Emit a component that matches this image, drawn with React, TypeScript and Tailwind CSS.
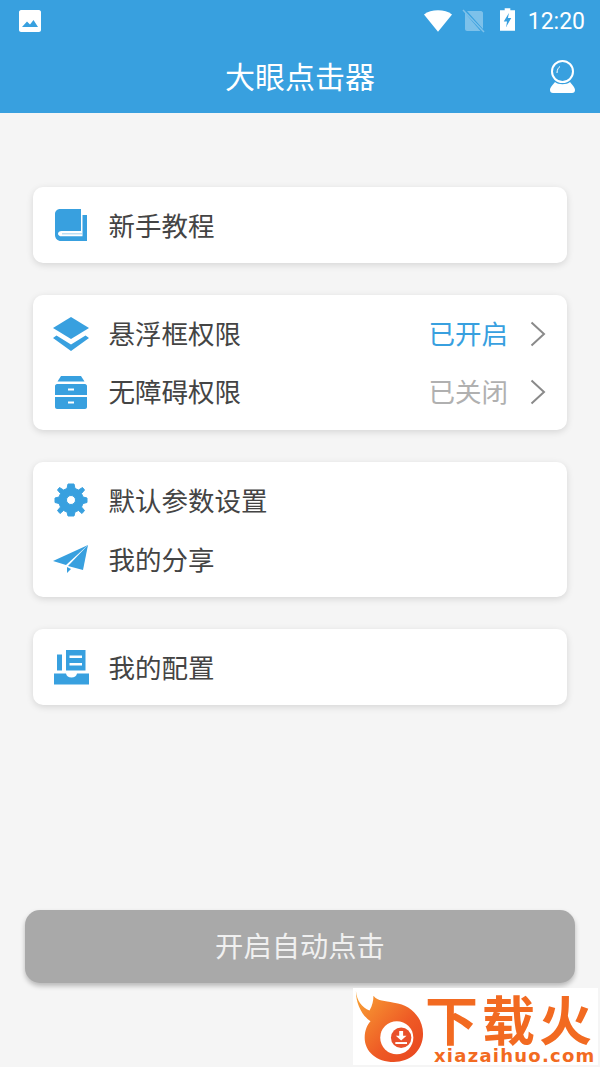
import React from 'react';

const cjk = "font-['Noto_Sans_CJK_SC',sans-serif]";

function BookIcon() {
  return (
    <svg width="32" height="32" viewBox="0 0 32 32" fill="#38a0df">
      <path d="M5 0H26V22H6.500C4.500 22 3 23.300 3 24.700C3 26.100 4.500 27.300 6.500 27.300H27.500V6H32V32H6C2.600 32 0 29.400 0 26V5C0 2.200 2.200 0 5 0Z" />
      <path d="M7 24H27V25.500H7Z" fillOpacity="0.35" />
    </svg>
  );
}

function LayersIcon() {
  return (
    <svg width="38" height="34" viewBox="0 0 38 34" fill="#38a0df" className="mt-[2px]">
      <path d="M19 0L37 11L19 22L1 11Z" />
      <path d="M4.500 18.500L19 27.500L33.500 18.500L37 21L19 34L1 21Z" />
    </svg>
  );
}

function DrawerIcon() {
  return (
    <svg width="32" height="33" viewBox="0 0 32 33" fill="#38a0df" className="mt-[2px]">
      <path d="M6 0H26L29.500 5.500H2.500Z" />
      <path fillRule="evenodd" d="M2 8H30C31 8 32 9 32 10V19H0V10C0 9 1 8 2 8ZM13 12.500V14.500H19V12.500Z" />
      <path fillRule="evenodd" d="M0 21H32V31C32 32 31 33 30 33H2C1 33 0 32 0 31ZM13 25.500V27.500H19V25.500Z" />
    </svg>
  );
}

function GearIcon() {
  return (
    <svg width="34" height="34" viewBox="0 0 34 34" fill="#38a0df" stroke="#38a0df" strokeWidth="1" strokeLinejoin="round">
      <path
        fillRule="evenodd"
        d="M14 1H20L21 5.500L24.500 7L28.500 4.500L30.500 7L27.500 10.500L29 14L33 15V19.500L29 20.500L27.500 24L30.500 27.500L28 30.500L24.500 27.500L21 29L20 33H14L13 29L9.500 27.500L6 30.500L3.500 27.500L6.500 24L5 20.500L1 19.500V15L5 14L6.500 10.500L3.500 7L5.500 4.500L9.500 7L13 5.500ZM17 12.500A4.500 4.500 0 1 0 17 21.500A4.500 4.500 0 1 0 17 12.500Z"
      />
    </svg>
  );
}

function PlaneIcon() {
  return (
    <svg width="36" height="28" viewBox="0 0 36 28" fill="#38a0df">
      <path d="M35 0L0 16L13 20Z" />
      <path d="M35 0L15 21L30 25Z" />
      <path d="M14 22L18 24L14 28Z" />
    </svg>
  );
}

function ConfigIcon() {
  return (
    <svg width="35" height="35" viewBox="0 0 35 35" fill="#38a0df">
      <path d="M3 4.500H8V20.500H3Z" />
      <path fillRule="evenodd" d="M12 0H31.500V20.500H12ZM15.500 5.500V8H28V5.500ZM15.500 13V15.500H28V13Z" />
      <path d="M0 23.500H12C12.500 26 14.500 27.500 17.500 27.500C20.500 27.500 22.500 26 23 23.500H35V34.500H0Z" />
    </svg>
  );
}

function Chevron() {
  return (
    <svg width="16" height="26" viewBox="0 0 16 26" fill="none" stroke="#8a8a8a" strokeWidth="2" className="mt-[2px]">
      <path d="M1.500 1.500L14 13L1.500 24.500" />
    </svg>
  );
}

function Row({
  icon,
  label,
  status,
  statusClass,
}: {
  icon: React.ReactNode;
  label: string;
  status?: string;
  statusClass?: string;
}) {
  return (
    <div className="flex h-[58px] items-center pl-[19px] pr-[21px]">
      <div className="mr-[18.500px] flex w-[38px] justify-center">{icon}</div>
      <span className="flex-1 text-[26.500px] text-[#444444]">{label}</span>
      {status && <span className={`mr-[22px] text-[26.500px] ${statusClass}`}>{status}</span>}
      {status && <Chevron />}
    </div>
  );
}

function Card({ className, children }: { className: string; children: React.ReactNode }) {
  return (
    <div className={`rounded-[10px] bg-white shadow-[0_2px_7px_rgba(0,0,0,0.13)] ${className}`}>
      {children}
    </div>
  );
}

function Watermark() {
  return (
    <div className="absolute left-[353px] top-[988px] flex h-[77px] w-[245px] bg-white">
      <svg width="72" height="77" viewBox="0 0 74 77" className="shrink-0">
        <defs>
          <linearGradient id="flame" x1="0" y1="0" x2="1" y2="1">
            <stop offset="0" stopColor="#f9a535" />
            <stop offset="0.6" stopColor="#ee5a25" />
            <stop offset="1" stopColor="#e8441f" />
          </linearGradient>
        </defs>
        <path
          d="M3 2C4 12 9 19 17 22C20 17 21 12 21 7C26 13 32 12 42 14C60 16 72 30 72 46C72 64 58 75 42 75C24 75 12 64 12 50C12 42 15 36 18 33C10 28 3 16 3 2Z"
          fill="url(#flame)"
        />
        <circle cx="45" cy="50" r="17" fill="white" />
        <circle cx="49.500" cy="50" r="10.500" fill="#e9502a" />
        <path d="M47.500 43H51.500V48H55L49.500 53L44 48H47.500Z" fill="white" />
        <path d="M43.500 54.500H55.500V56.500H43.500Z" fill="white" />
      </svg>
      <div className="flex min-w-0 flex-col items-start">
        <span className={`mt-[4px] h-[55px] whitespace-nowrap text-[53px] leading-[52px] font-bold tracking-[4px] text-[#f26a21] ${cjk}`}>
          下载火
        </span>
        <span className="ml-[9px] whitespace-nowrap font-['DejaVu_Sans',sans-serif] text-[18px] leading-[18px] font-bold tracking-[1.250px] text-[#f26a21]">
          xiazaihuo.com
        </span>
      </div>
    </div>
  );
}

export default function App() {
  return (
    <div className={`relative flex h-[1067px] w-[600px] flex-col overflow-hidden bg-[#f5f5f5] ${cjk}`}>
      <header className="shrink-0 bg-[#38a0df] text-white">
        <div className="flex h-[41px] items-center pl-[19px] pr-[15px]">
          <svg width="22" height="22" viewBox="0 0 22 22" fill="white">
            <path
              fillRule="evenodd"
              d="M2 0H20C21 0 22 1 22 2V20C22 21 21 22 20 22H2C1 22 0 21 0 20V2C0 1 1 0 2 0ZM3 17H19L14.500 10L11 14.500L8 11.500Z"
            />
          </svg>
          <div className="flex-1" />
          <svg width="28" height="22" viewBox="0 0 30 23" fill="white" className="mr-[10px]">
            <path d="M15 23L0 4.500C4 1.500 9 0 15 0C21 0 26 1.500 30 4.500Z" />
          </svg>
          <svg width="24" height="24" viewBox="0 0 24 24" className="mr-[14px]">
            <path d="M3 2H19C20 2 21 3 21 4V20L5 2Z" fill="white" fillOpacity="0.35" />
            <path d="M3 4L18.500 22H5C4 22 3 21 3 20Z" fill="white" fillOpacity="0.35" />
            <path d="M1 1L22 23" stroke="white" strokeOpacity="0.35" strokeWidth="1.500" />
          </svg>
          <svg width="15" height="25" viewBox="0 0 16 24" fill="white" className="mr-[13px] mt-[-2px]">
            <path
              fillRule="evenodd"
              d="M5 0H11V2H16V24H0V2H5ZM9.500 5L4 14H7.500L6.500 20L12 10.500H8.500Z"
            />
          </svg>
          <span className="mt-[1px] font-['Roboto',sans-serif] text-[23px] leading-none">12:20</span>
        </div>
        <div className="relative flex h-[72px] items-center justify-center">
          <span className="mb-[4px] text-[30px] leading-none">大眼点击器</span>
          <svg width="28" height="35" viewBox="0 0 28 35" className="absolute right-[23px] top-[18px]">
            <circle cx="13.500" cy="12.500" r="10.500" fill="none" stroke="white" strokeWidth="2" />
            <path d="M8 14C8 10.500 9.500 8.500 11 7.500" fill="none" stroke="white" strokeWidth="1" />
            <path d="M6 23C9 26 18 26 21 23C23 26 26 28 26 31C26 33 25 34 23 34H4C2 34 1 33 1 31C1 28 4 26 6 23Z" fill="white" />
          </svg>
        </div>
      </header>

      <main className="flex flex-1 flex-col px-[33px] pt-[74px]">
        <Card className="flex h-[76px] flex-col justify-center">
          <Row icon={<BookIcon />} label="新手教程" />
        </Card>
        <Card className="mt-[32px] h-[135px] pt-[9px]">
          <Row
            icon={<LayersIcon />}
            label="悬浮框权限"
            status="已开启"
            statusClass="text-[#38a0df]"
          />
          <Row
            icon={<DrawerIcon />}
            label="无障碍权限"
            status="已关闭"
            statusClass="text-[#b0b0b0]"
          />
        </Card>
        <Card className="mt-[32px] flex h-[135px] flex-col gap-[1px] pt-[9px]">
          <Row icon={<GearIcon />} label="默认参数设置" />
          <Row icon={<PlaneIcon />} label="我的分享" />
        </Card>
        <Card className="mt-[32px] flex h-[76px] flex-col justify-center">
          <Row icon={<ConfigIcon />} label="我的配置" />
        </Card>
      </main>

      <div className="shrink-0 px-[25px] pb-[84px]">
        <button className="flex h-[73px] w-full items-center justify-center rounded-[15px] bg-[#a9a9a9] pb-[2px] text-[28.300px] text-[#f0f0f0] shadow-[0_3px_5px_rgba(0,0,0,0.25)]">
          开启自动点击
        </button>
      </div>

      <Watermark />
    </div>
  );
}
